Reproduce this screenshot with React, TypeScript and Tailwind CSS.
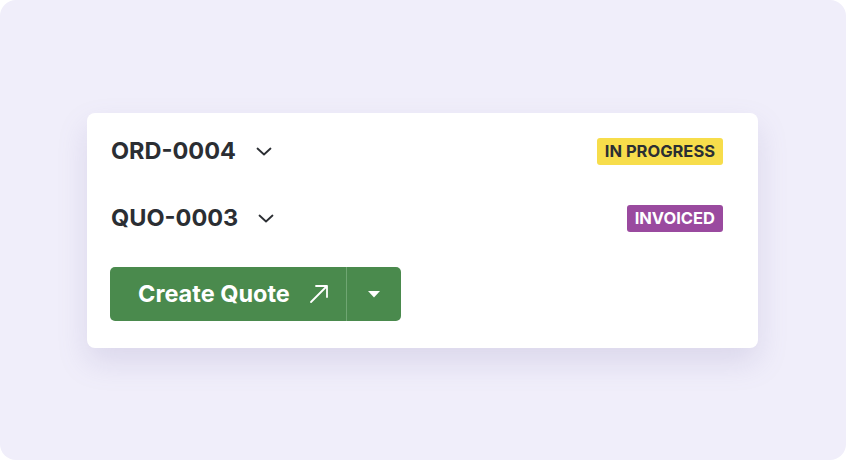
import React from 'react';

const Chevron = () => (
    <svg width="18" height="18" viewBox="0 0 18 18" fill="none" className="text-[#2b2e33]">
        <path d="M2.5 6.5l6.5 6 6.5-6" stroke="currentColor" strokeWidth="1.8" strokeLinecap="round" strokeLinejoin="round" />
    </svg>
);

const App: React.FC = () => {
    return (
        <div className="w-[846px] h-[460px] bg-white" style={{ fontFamily: 'Inter, "Noto Sans", sans-serif' }}>
            <div className="w-full h-full rounded-[16px] bg-[#f0eefa] flex items-start justify-start pt-[113px] pl-[87px]">
                <div className="w-[671px] h-[235px] bg-white rounded-[8px] shadow-[0_14px_30px_rgba(120,110,170,0.18)] pl-6 pr-[35px] pt-6">
                    {/* ORD row */}
                    <div className="h-7 flex items-center justify-between">
                        <div className="flex items-center gap-[19px]">
                            <span className="text-[23.5px] font-bold text-[#2b2e33]">ORD-0004</span>
                            <Chevron />
                        </div>
                        <span className="h-[27px] px-2 rounded-[3px] bg-[#f7dd4b] text-[#2b2e33] text-[16.5px] font-bold flex items-center">IN PROGRESS</span>
                    </div>

                    {/* QUO row */}
                    <div className="h-7 mt-[39px] flex items-center justify-between">
                        <div className="flex items-center gap-[19px]">
                            <span className="text-[23.5px] font-bold text-[#2b2e33]">QUO-0003</span>
                            <Chevron />
                        </div>
                        <span className="h-[27px] px-2 rounded-[3px] bg-[#9a4a9f] text-white text-[16.5px] font-bold flex items-center">INVOICED</span>
                    </div>

                    {/* Create Quote */}
                    <div className="mt-[35px] flex h-[54px] w-[291px] -ml-[1px] rounded-[5px] bg-[#4a8a4d] text-white overflow-hidden">
                        <button className="flex-1 flex items-center pl-[28px] gap-[18px] border-r border-[#6fa672]">
                            <span className="text-[23.5px] font-bold">Create Quote</span>
                            <svg width="22" height="22" viewBox="0 0 22 22" fill="none">
                                <path d="M3 19L19 3M8 3h11v11" stroke="currentColor" strokeWidth="1.8" strokeLinecap="round" strokeLinejoin="round" />
                            </svg>
                        </button>
                        <button className="w-[54px] flex items-center justify-center">
                            <svg width="14" height="8" viewBox="0 0 14 8">
                                <path d="M1 1h12L7 7.5z" fill="currentColor" />
                            </svg>
                        </button>
                    </div>
                </div>
            </div>
        </div>
    );
};

export default App;
